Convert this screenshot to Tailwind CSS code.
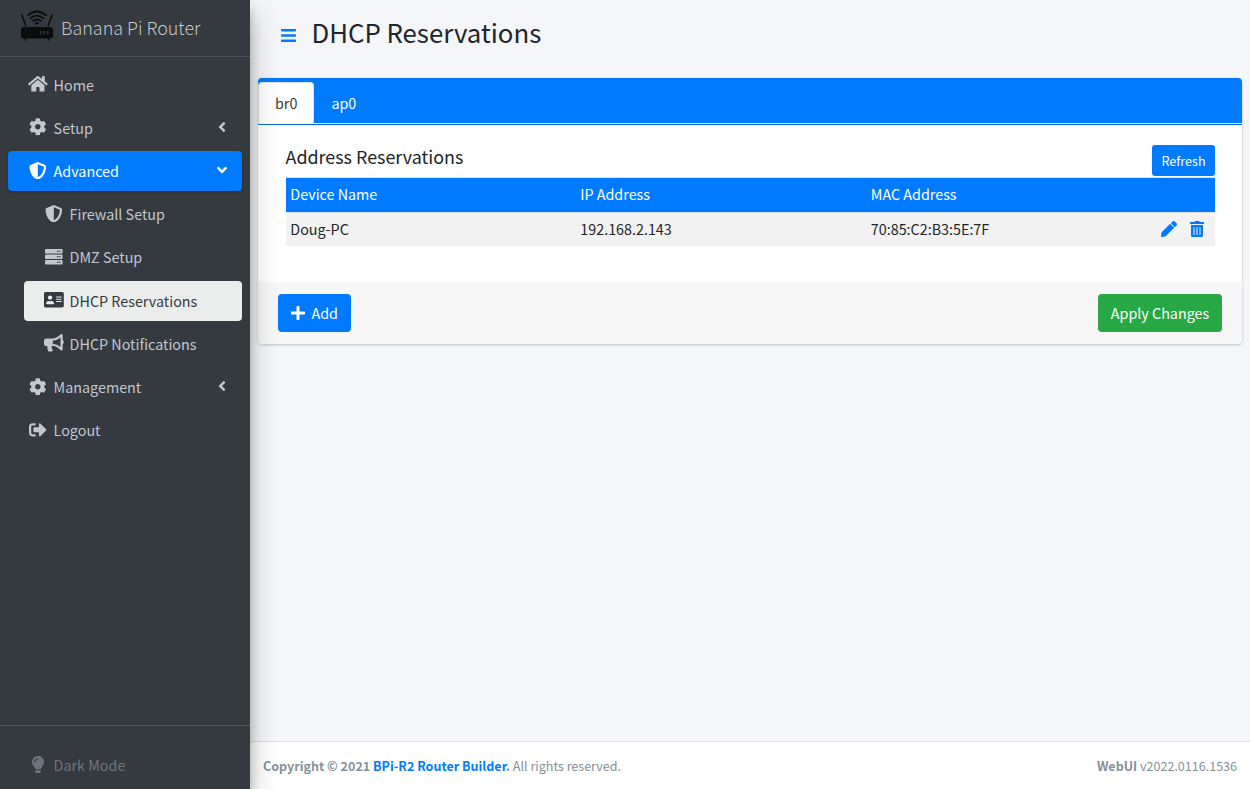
<!DOCTYPE html>
<html lang="en">
<head>
<meta charset="utf-8">
<title>DHCP Reservations</title>
<script src="https://cdn.jsdelivr.net/npm/@tailwindcss/browser@4"></script>
</head>
<body class="flex h-screen overflow-hidden bg-[#f4f6f9] font-['Noto_Sans_CJK_SC','Noto_Sans',sans-serif] text-[14.33px] leading-6 text-[#212529]">
<svg class="hidden">
  <symbol id="cog" viewBox="0 0 512 512"><path d="M487.4 315.7l-42.6-24.6c4.3-23.2 4.3-47 0-70.2l42.6-24.6c4.9-2.8 7.1-8.6 5.5-14-11.1-35.6-30-67.8-54.7-94.6-3.8-4.1-10-5.1-14.8-2.3L380.8 110c-17.9-15.4-38.5-27.3-60.8-35.1V25.8c0-5.6-3.9-10.5-9.4-11.7-36.7-8.2-74.3-7.8-109.2 0-5.5 1.2-9.4 6.1-9.4 11.7V75c-22.2 7.9-42.8 19.8-60.8 35.1L88.700 85.500c-4.900-2.800-11-1.900-14.800 2.300-24.700 26.700-43.600 58.900-54.700 94.600-1.700 5.400.6 11.200 5.500 14L67.300 221c-4.300 23.200-4.300 47 0 70.200l-42.600 24.600c-4.900 2.800-7.100 8.600-5.500 14 11.100 35.600 30 67.800 54.700 94.600 3.800 4.100 10 5.100 14.800 2.300l42.600-24.600c17.900 15.400 38.500 27.300 60.800 35.100v49.200c0 5.600 3.900 10.500 9.400 11.700 36.700 8.200 74.300 7.800 109.200 0 5.500-1.200 9.400-6.100 9.400-11.700v-49.200c22.200-7.900 42.800-19.800 60.800-35.100l42.600 24.600c4.900 2.800 11 1.900 14.800-2.300 24.700-26.700 43.600-58.900 54.700-94.600 1.500-5.500-.7-11.300-5.600-14.100zM256 336c-44.100 0-80-35.900-80-80s35.900-80 80-80 80 35.900 80 80-35.900 80-80 80z"/></symbol>
  <symbol id="shield" viewBox="0 0 512 512"><path d="M466.500 83.700l-192-80a48.150 48.150 0 0 0-36.900 0l-192 80C27.700 91.100 16 108.600 16 128c0 198.500 114.500 335.700 221.500 380.300 11.800 4.900 25.100 4.900 36.900 0C360.100 472.600 496 349.300 496 128c0-19.400-11.700-36.900-29.500-44.300zM256.100 446.300l-.1-381 175.900 73.300c-3.300 151.400-82.100 261.100-175.800 307.700z"/></symbol>
  <symbol id="left" viewBox="0 0 256 512"><path d="M31.700 239l136-136c9.400-9.400 24.600-9.400 33.900 0l22.600 22.600c9.400 9.400 9.400 24.600 0 33.900L127.900 256l96.400 96.400c9.400 9.400 9.400 24.600 0 33.900L201.700 409c-9.400 9.400-24.600 9.400-33.900 0l-136-136c-9.500-9.400-9.500-24.600-.1-34z"/></symbol>
</svg>

<aside class="relative z-10 flex w-[250px] shrink-0 flex-col bg-[#343a40] text-[#c2c7d0] shadow-[0_14px_28px_rgba(0,0,0,0.25),0_10px_10px_rgba(0,0,0,0.22)]">
  <div class="flex h-[57px] shrink-0 items-center border-b border-[#4b545c] pl-[20px]">
    <svg class="-mt-1 h-[32px] w-[34px]" viewBox="0 0 34 32" fill="none" stroke="#0b0c0e" stroke-linecap="round">
      <path d="M1.800 5l4 10.500M32.200 5l-4 10.500" stroke-width="1.600"/>
      <path d="M7.800 5.400Q17-2.400 26.200 5.400M10.500 8.300Q17 3 23.500 8.300M13.200 11Q17 8 20.800 11" stroke-width="1.700"/>
      <circle cx="17" cy="13.200" r="1.500" fill="#0b0c0e" stroke="none"/>
      <rect x="1" y="17" width="32" height="11.500" rx="2.500" fill="#0b0c0e" stroke="none"/>
      <path d="M5.500 28.500v1.500M28.500 28.500v1.500" stroke-width="1.700"/>
      <path d="M20.700 21v3.200M24.200 21v3.200M27.700 21v3.200" stroke="#343a40" stroke-width="1.300" stroke-linecap="butt"/>
    </svg>
    <span class="-mt-[2px] ml-[7px] text-[17.9px] font-light leading-[30px] text-[#c5c7c9]">Banana Pi Router</span>
  </div>

  <nav class="flex flex-1 flex-col gap-[3.2px] px-2 pt-[7.6px]">
    <a class="flex h-10 items-center px-4"><span class="-mt-px ml-px mr-[3px] flex w-[25.6px] justify-center"><svg class="h-[17.6px] w-[19.8px]" fill="currentColor" viewBox="0 0 576 512"><path d="M280.370 148.260L96 300.110V464a16 16 0 0 0 16 16l112.060-.29a16 16 0 0 0 15.920-16V368a16 16 0 0 1 16-16h64a16 16 0 0 1 16 16v95.640a16 16 0 0 0 16 16.050L464 480a16 16 0 0 0 16-16V300L295.670 148.260a12.190 12.190 0 0 0-15.300 0zM571.600 251.470L488 182.560V44.050a12 12 0 0 0-12-12h-56a12 12 0 0 0-12 12v72.610L318.470 43a48 48 0 0 0-61 0L4.340 251.470a12 12 0 0 0-1.600 16.900l25.500 31A12 12 0 0 0 45.150 301l235.220-193.740a12.190 12.190 0 0 1 15.300 0L530.900 301a12 12 0 0 0 16.900-1.600l25.500-31a12 12 0 0 0-1.700-16.930z"/></svg></span><span>Home</span></a>
    <a class="flex h-10 items-center px-4"><span class="-mt-px ml-px mr-[3px] flex w-[25.6px] justify-center"><svg class="size-[17.6px]" fill="currentColor"><use href="#cog"/></svg></span><span class="flex-1">Setup</span><svg class="-mt-[2px] h-4 w-2" fill="currentColor"><use href="#left"/></svg></a>
    <a class="flex h-10 items-center rounded bg-[#007bff] px-4 text-white shadow-[0_1px_3px_rgba(0,0,0,0.12),0_1px_2px_rgba(0,0,0,0.24)]"><span class="-mt-px ml-px mr-[3px] flex w-[25.6px] justify-center"><svg class="size-[17.6px]" fill="currentColor"><use href="#shield"/></svg></span><span class="flex-1">Advanced</span><svg class="-mt-px h-4 w-2 -rotate-90 overflow-visible" fill="currentColor"><use href="#left"/></svg></a>
    <div class="flex flex-col gap-[3.2px] pl-4">
      <a class="flex h-10 items-center px-4"><span class="-mt-px ml-px mr-[3px] flex w-[25.6px] justify-center"><svg class="size-[17.6px]" fill="currentColor"><use href="#shield"/></svg></span><span>Firewall Setup</span></a>
      <a class="flex h-10 items-center px-4"><span class="-mt-px ml-px mr-[3px] flex w-[25.6px] justify-center"><svg class="size-[17.6px]" fill="currentColor" viewBox="0 0 512 512"><path d="M480 160H32c-17.673 0-32-14.327-32-32V64c0-17.673 14.327-32 32-32h448c17.673 0 32 14.327 32 32v64c0 17.673-14.327 32-32 32zm-48-88c-13.255 0-24 10.745-24 24s10.745 24 24 24 24-10.745 24-24-10.745-24-24-24zm-64 0c-13.255 0-24 10.745-24 24s10.745 24 24 24 24-10.745 24-24-10.745-24-24-24zm112 248H32c-17.673 0-32-14.327-32-32v-64c0-17.673 14.327-32 32-32h448c17.673 0 32 14.327 32 32v64c0 17.673-14.327 32-32 32zm-48-88c-13.255 0-24 10.745-24 24s10.745 24 24 24 24-10.745 24-24-10.745-24-24-24zm-64 0c-13.255 0-24 10.745-24 24s10.745 24 24 24 24-10.745 24-24-10.745-24-24-24zm112 248H32c-17.673 0-32-14.327-32-32v-64c0-17.673 14.327-32 32-32h448c17.673 0 32 14.327 32 32v64c0 17.673-14.327 32-32 32zm-48-88c-13.255 0-24 10.745-24 24s10.745 24 24 24 24-10.745 24-24-10.745-24-24-24zm-64 0c-13.255 0-24 10.745-24 24s10.745 24 24 24 24-10.745 24-24-10.745-24-24-24z"/></svg></span><span>DMZ Setup</span></a>
      <a class="flex h-10 items-center rounded bg-[#ebecec] px-4 text-[#343a40]"><span class="-mt-px ml-px mr-[3px] flex w-[25.6px] justify-center"><svg class="h-[17.6px] w-[19.8px]" fill="currentColor" viewBox="0 0 576 512"><path d="M528 32H48C21.500 32 0 53.500 0 80v352c0 26.500 21.500 48 48 48h480c26.500 0 48-21.500 48-48V80c0-26.500-21.500-48-48-48zm-352 96c35.300 0 64 28.700 64 64s-28.700 64-64 64-64-28.700-64-64 28.700-64 64-64zm112 236.800c0 10.600-10 19.200-22.400 19.200H86.400C74 384 64 375.400 64 364.800v-19.200c0-31.800 30.100-57.600 67.200-57.600h5c12.300 5.100 25.700 8 39.800 8s27.600-2.900 39.800-8h5c37.100 0 67.200 25.800 67.200 57.600v19.200zM512 312c0 4.400-3.600 8-8 8H360c-4.400 0-8-3.600-8-8v-16c0-4.400 3.600-8 8-8h144c4.400 0 8 3.600 8 8v16zm0-64c0 4.400-3.600 8-8 8H360c-4.400 0-8-3.600-8-8v-16c0-4.400 3.600-8 8-8h144c4.400 0 8 3.600 8 8v16zm0-64c0 4.400-3.600 8-8 8H360c-4.400 0-8-3.600-8-8v-16c0-4.400 3.600-8 8-8h144c4.400 0 8 3.600 8 8v16z"/></svg></span><span>DHCP Reservations</span></a>
      <a class="flex h-10 items-center px-4"><span class="-mt-px ml-px mr-[3px] flex w-[25.6px] justify-center"><svg class="h-[17.6px] w-[19.8px]" fill="currentColor" viewBox="0 0 576 512"><path d="M576 240c0-23.630-12.950-44.040-32-55.120V32.010C544 23.260 537.020 0 512 0c-7.120 0-14.190 2.380-19.980 7.020l-85.030 68.030C364.280 109.190 310.660 128 256 128H64c-35.350 0-64 28.650-64 64v96c0 35.350 28.650 64 64 64h33.700c-1.390 10.480-2.180 21.140-2.180 32 0 39.770 9.260 77.350 25.560 110.940 5.190 10.690 16.520 17.060 28.400 17.060h74.280c26.050 0 41.690-29.840 25.900-50.560-16.400-21.520-26.150-48.360-26.150-77.440 0-11.110 1.620-21.790 4.410-32H256c54.660 0 108.280 18.810 150.980 52.950l85.030 68.030a32.023 32.023 0 0 0 19.980 7.020c24.920 0 32-22.780 32-32V295.130C563.050 284.040 576 263.630 576 240zm-96 141.420l-33.050-26.440C392.950 311.780 325.120 288 256 288v-96c69.120 0 136.950-23.780 190.950-66.980L480 98.580v282.840z"/></svg></span><span>DHCP Notifications</span></a>
    </div>
    <a class="flex h-10 items-center px-4"><span class="-mt-px ml-px mr-[3px] flex w-[25.6px] justify-center"><svg class="size-[17.6px]" fill="currentColor"><use href="#cog"/></svg></span><span class="flex-1">Management</span><svg class="-mt-px h-4 w-2" fill="currentColor"><use href="#left"/></svg></a>
    <a class="flex h-10 items-center px-4"><span class="-mt-px ml-px mr-[3px] flex w-[25.6px] justify-center"><svg class="size-[17.6px]" fill="currentColor" viewBox="0 0 512 512"><path d="M497 273L329 441c-15 15-41 4.500-41-17v-96H152c-13.300 0-24-10.700-24-24v-96c0-13.300 10.700-24 24-24h136V88c0-21.400 25.900-32 41-17l168 168c9.300 9.400 9.300 24.600 0 34zM192 436v-40c0-6.600-5.400-12-12-12H96c-17.700 0-32-14.300-32-32V160c0-17.700 14.300-32 32-32h84c6.600 0 12-5.400 12-12V76c0-6.600-5.400-12-12-12H96c-53 0-96 43-96 96v192c0 53 43 96 96 96h84c6.600 0 12-5.400 12-12z"/></svg></span><span>Logout</span></a>
  </nav>

  <div class="h-16 shrink-0 border-t border-[#4f5962] px-2 pt-[19px]">
    <a class="flex h-10 items-center px-4 text-[#6c757d]"><span class="-mt-px ml-px mr-[3px] flex w-[25.6px] justify-center"><svg class="h-[17.6px] w-[12.1px]" fill="currentColor" viewBox="0 0 352 512"><path d="M96.060 454.350c.01 6.290 1.870 12.450 5.360 17.690l17.090 25.690a31.990 31.990 0 0 0 26.640 14.280h61.710a31.990 31.990 0 0 0 26.640-14.280l17.090-25.690a31.989 31.989 0 0 0 5.360-17.690l.04-38.350H96.010l.05 38.350zM0 176c0 44.370 16.450 84.850 43.560 115.780 16.520 18.850 42.360 58.230 52.210 91.450.04.26.07.52.11.78h160.240c.04-.26.07-.51.11-.78 9.850-33.220 35.690-72.600 52.210-91.450C335.550 260.850 352 220.370 352 176 352 78.610 272.910-.3 175.450 0 73.440.31 0 82.970 0 176zm176-80c-44.110 0-80 35.890-80 80 0 8.840-7.160 16-16 16s-16-7.160-16-16c0-61.760 50.240-112 112-112 8.840 0 16 7.160 16 16s-7.160 16-16 16z"/></svg></span><span>Dark Mode</span></a>
  </div>
</aside>

<div class="flex min-w-0 flex-1 flex-col">
  <header class="flex h-[78px] shrink-0 items-start pl-[31px] pt-3">
    <svg class="mt-[14.500px] h-[17px] w-[15px]" fill="#007bff" viewBox="0 0 448 512"><path d="M16 132h416c8.837 0 16-7.163 16-16V76c0-8.837-7.163-16-16-16H16C7.163 60 0 67.163 0 76v40c0 8.837 7.163 16 16 16zm0 160h416c8.837 0 16-7.163 16-16v-40c0-8.837-7.163-16-16-16H16c-8.837 0-16 7.163-16 16v40c0 8.837 7.163 16 16 16zm0 160h416c8.837 0 16-7.163 16-16v-40c0-8.837-7.163-16-16-16H16c-8.837 0-16 7.163-16 16v40c0 8.837 7.163 16 16 16z"/></svg>
    <h1 class="ml-[15.400px] text-[25.800px] leading-[40px]">DHCP Reservations</h1>
  </header>

  <main class="flex-1 px-2">
    <section class="overflow-hidden rounded bg-white shadow-[0_0_1px_rgba(0,0,0,0.125),0_1px_3px_rgba(0,0,0,0.2)]">
      <div class="border-b border-[#0069d9] bg-[#007bff]">
        <div class="flex h-[46px] border-b border-[#dee2e6] pt-1">
          <a class="h-[42px] rounded-t border border-b-0 border-[#dee2e6] bg-white px-4 pt-2 text-[#343a40]">br0</a>
          <a class="px-[17px] pt-[9px] text-white">ap0</a>
        </div>
      </div>
      <div class="h-[157px] pl-[27.500px] pr-[27px] pt-5">
        <div class="flex h-[32px] items-start justify-between">
          <h2 class="-mt-px text-[17.900px] leading-6">Address Reservations</h2>
          <button class="h-[31px] rounded-[3px] bg-[#007bff] px-[9.500px] text-[12.540px] leading-[32px] text-white">Refresh</button>
        </div>
        <div class="grid h-[35px] grid-cols-[290px_290.500px_1fr] border-t border-[#dee2e6] bg-[#007bff] px-[4.800px] pt-1 text-white">
          <span>Device Name</span><span>IP Address</span><span>MAC Address</span>
        </div>
        <div class="grid h-[34px] grid-cols-[290px_290.500px_1fr_auto] border-t border-[#dee2e6] bg-[#f2f2f2] px-[4.800px] pt-1">
          <span>Doug-PC</span><span>192.168.2.143</span><span>70:85:C2:B3:5E:7F</span>
          <span class="flex h-6 items-center gap-[13px] pr-[6px] text-[#007bff]">
            <svg class="size-4" fill="currentColor" viewBox="0 0 512 512"><path d="M497.900 142.100l-46.100 46.100c-4.700 4.700-12.300 4.700-17 0l-111-111c-4.700-4.700-4.700-12.300 0-17l46.100-46.100c18.700-18.700 49.100-18.700 67.900 0l60.100 60.100c18.800 18.700 18.800 49.100 0 67.900zM284.200 99.800L21.600 362.400.4 483.900c-2.900 16.400 11.400 30.600 27.800 27.800l121.500-21.300 262.600-262.600c4.700-4.700 4.700-12.300 0-17l-111-111c-4.800-4.700-12.400-4.700-17.100 0z"/></svg>
            <svg class="h-4 w-[14px]" fill="currentColor" viewBox="0 0 448 512"><path d="M32 464a48 48 0 0 0 48 48h288a48 48 0 0 0 48-48V128H32zm272-256a16 16 0 0 1 32 0v224a16 16 0 0 1-32 0zm-96 0a16 16 0 0 1 32 0v224a16 16 0 0 1-32 0zm-96 0a16 16 0 0 1 32 0v224a16 16 0 0 1-32 0zM432 32H312l-9.400-18.700A24 24 0 0 0 281.100 0H166.800a23.720 23.720 0 0 0-21.400 13.300L136 32H16A16 16 0 0 0 0 48v32a16 16 0 0 0 16 16h416a16 16 0 0 0 16-16V48a16 16 0 0 0-16-16z"/></svg>
          </span>
        </div>
      </div>
      <div class="flex h-[62px] items-center justify-between bg-[#f7f7f7] px-5">
        <button class="flex h-[38px] w-[73px] items-center rounded bg-[#007bff] px-[13px] text-white"><svg class="mr-[6.500px] h-4 w-[14px]" fill="currentColor" viewBox="0 0 448 512"><path d="M416 208H272V64c0-17.670-14.330-32-32-32h-32c-17.670 0-32 14.330-32 32v144H32c-17.670 0-32 14.330-32 32v32c0 17.670 14.330 32 32 32h144v144c0 17.670 14.330 32 32 32h32c17.670 0 32-14.330 32-32V304h144c17.670 0 32-14.330 32-32v-32c0-17.670-14.330-32-32-32z"/></svg>Add</button>
        <button class="h-[38px] w-[124px] rounded bg-[#28a745] text-center text-white">Apply Changes</button>
      </div>
    </section>
  </main>

  <footer class="flex h-12 shrink-0 items-center justify-between border-t border-[#dee2e6] bg-white px-[13px] text-[12.540px] text-[#869099]">
    <div><b>Copyright © 2021 <a class="text-[#007bff]">BPi-R2 Router Builder</a>.</b> All rights reserved.</div>
    <div><b>WebUI</b> v2022.0116.1536</div>
  </footer>
</div>
</body>
</html>
